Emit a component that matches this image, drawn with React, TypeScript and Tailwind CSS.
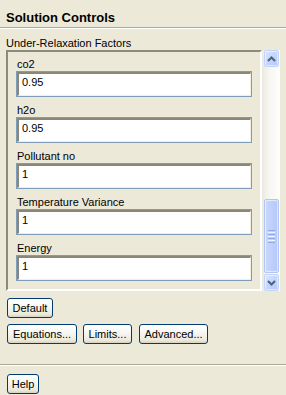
import React from "react";

const btn =
  "h-[20px] rounded-[3px] border border-[#003c74] bg-[linear-gradient(180deg,#ffffff_0%,#f6f6f2_45%,#ece9d8_85%,#d6d0c5_100%)] flex items-center justify-center text-[11px] leading-[13px] text-black";

function Field({ label, value }: { label: string; value: string }) {
  return (
    <div className="flex flex-col">
      <div className="h-[13px] leading-[13px] pl-[1px]">{label}</div>
      <div className="w-[236px] h-[26px] border border-[#7f9db9] bg-white">
        <div className="h-full border-t-2 border-l-2 border-t-[#8a8776] border-l-[#8a8776] border-b border-r border-b-[#f1efe2] border-r-[#f1efe2] pl-[3px] pt-[2px] leading-[13px]">
          {value}
        </div>
      </div>
    </div>
  );
}

function ScrollBtn({ up }: { up: boolean }) {
  return (
    <div className="w-[15px] h-[17px] rounded-[2px] border border-[#c3d3fd] bg-[linear-gradient(135deg,#dbe5fd_0%,#c5d5fc_50%,#b4c8f7_100%)] flex items-center justify-center shadow-[inset_0_0_0_1px_rgba(255,255,255,0.5)]">
      <svg width="9" height="6" viewBox="0 0 9 6">
        <path
          d={up ? "M1 5 L4.5 1.5 L8 5" : "M1 1 L4.5 4.5 L8 1"}
          fill="none"
          stroke="#4d6185"
          strokeWidth="2"
        />
      </svg>
    </div>
  );
}

export default function App() {
  return (
    <div className="w-[286px] h-[395px] bg-[#ece9d8] font-['Liberation_Sans',Arial,sans-serif] text-[11px] text-black overflow-hidden">
      <div className="h-[27px] pl-[6px] pt-[10px] text-[13px] font-bold leading-[16px]">
        Solution Controls
      </div>
      <div className="h-px bg-[#aca899]" />
      <div className="h-px bg-white" />
      <div className="mt-[8px] h-[13px] leading-[13px] pl-[6px]">
        Under-Relaxation Factors
      </div>
      <div className="flex pl-[6px]">
        <div className="w-[256px] h-[241px] border-t-2 border-l-2 border-t-[#8d8a7a] border-l-[#8d8a7a] border-b-2 border-r-2 border-b-white border-r-white pt-[6px] pl-[8px] flex flex-col gap-[7px]">
          <Field label="co2" value="0.95" />
          <Field label="h2o" value="0.95" />
          <Field label="Pollutant no" value="1" />
          <Field label="Temperature Variance" value="1" />
          <Field label="Energy" value="1" />
        </div>
        <div className="w-[18px] h-[241px] pl-[2px] pr-[1px] bg-[linear-gradient(90deg,#eceae0_0%,#f7f6f1_40%,#fefefb_100%)] flex flex-col">
          <ScrollBtn up />
          <div className="flex-1" />
          <div className="w-[15px] h-[74px] rounded-[2px] border border-[#b2c6f6] bg-[linear-gradient(90deg,#c9d8fc_0%,#bfd0fb_50%,#b3c8f8_100%)] shadow-[inset_0_0_0_1px_rgba(255,255,255,0.55)] flex flex-col items-center justify-center gap-[1px]">
            <div className="w-[7px] h-px bg-[#8eaae8]" />
            <div className="w-[7px] h-px bg-[#eef3fe]" />
            <div className="w-[7px] h-px bg-[#8eaae8]" />
            <div className="w-[7px] h-px bg-[#eef3fe]" />
            <div className="w-[7px] h-px bg-[#8eaae8]" />
            <div className="w-[7px] h-px bg-[#eef3fe]" />
            <div className="w-[7px] h-px bg-[#8eaae8]" />
          </div>
          <div className="h-[1px]" />
          <ScrollBtn up={false} />
        </div>
      </div>
      <div className="mt-[7px] pl-[7px] flex">
        <div className={`${btn} w-[46px]`}>Default</div>
      </div>
      <div className="mt-[6px] pl-[7px] flex">
        <div className={`${btn} w-[70px]`}>Equations...</div>
        <div className={`${btn} w-[49px] ml-[6px]`}>Limits...</div>
        <div className={`${btn} w-[69px] ml-[7px]`}>Advanced...</div>
      </div>
      <div className="mt-[20px] h-px bg-[#aca899]" />
      <div className="h-px bg-white" />
      <div className="mt-[8px] pl-[7px] flex">
        <div className={`${btn} w-[32px]`}>Help</div>
      </div>
    </div>
  );
}
